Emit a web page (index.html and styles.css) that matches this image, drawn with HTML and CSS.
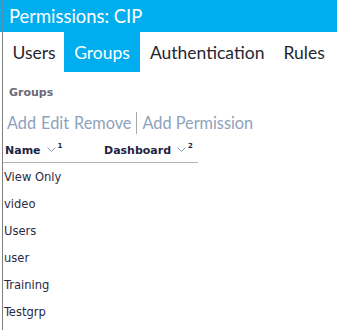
FILE: index.html
```html
<!DOCTYPE html>
<html>
<head>
<meta charset="utf-8">
<link rel="stylesheet" href="styles.css">
</head>
<body>
<div class="page">
  <div class="titlebar">Permissions: CIP</div>
  <div class="frame">
    <nav class="tabs">
      <span class="tab">Users</span>
      <span class="tab active">Groups</span>
      <span class="tab">Authentication</span>
      <span class="tab">Rules</span>
    </nav>
    <div class="section-label">Groups</div>
    <div class="toolbar">
      <span class="tool">Add</span>
      <span class="tool">Edit</span>
      <span class="tool">Remove</span>
      <span class="sep"></span>
      <span class="tool">Add Permission</span>
    </div>
    <div class="grid">
      <div class="grid-head">
        <div class="col col-name">Name<span class="sort"><svg width="9" height="6" viewBox="0 0 9 6"><path d="M0.5 0.5 L4.5 4.5 L8.5 0.5" fill="none" stroke="#8a9ab5" stroke-width="1"/></svg><sup>1</sup></span></div>
        <div class="col col-dash">Dashboard<span class="sort"><svg width="9" height="6" viewBox="0 0 9 6"><path d="M0.5 0.5 L4.5 4.5 L8.5 0.5" fill="none" stroke="#8a9ab5" stroke-width="1"/></svg><sup>2</sup></span></div>
      </div>
      <div class="row">View Only</div>
      <div class="row">video</div>
      <div class="row">Users</div>
      <div class="row">user</div>
      <div class="row">Training</div>
      <div class="row">Testgrp</div>
    </div>
  </div>
</div>
</body>
</html>
```
FILE: styles.css
```css
html, body {
  margin: 0;
  padding: 0;
  background: #ffffff;
}
.page {
  width: 337px;
  height: 330px;
  overflow: hidden;
}
.titlebar {
  height: 32px;
  box-sizing: border-box;
  padding: 5px 0 0 9px;
  background: linear-gradient(to right, #00aeef 2px, #4f93b3 2px, #4f93b3 3px, #00aeef 3px);
  color: #ffffff;
  font-family: "Lato", sans-serif;
  font-size: 18.4px;
  line-height: 22px;
}
.frame {
  margin-left: 2px;
  border-left: 1px solid #808080;
  height: 298px;
}
.tabs {
  display: flex;
  height: 40px;
}
.tab {
  display: flex;
  align-items: center;
  padding: 0 9.5px;
  font-family: "Lato", sans-serif;
  font-size: 17.5px;
  color: #262630;
}
.tab:first-child {
  padding-right: 8px;
}
.tab.active {
  background: #00aeef;
  color: #ffffff;
  padding: 0 10.5px;
}
.section-label {
  padding: 15px 0 0 6px;
  height: 25px;
  box-sizing: border-box;
  font-family: "DejaVu Sans", sans-serif;
  font-weight: bold;
  font-size: 11px;
  line-height: 12px;
  color: #6a6a78;
}
.toolbar {
  display: flex;
  align-items: center;
  gap: 5px;
  height: 39px;
  box-sizing: border-box;
  padding: 12px 0 0 4px;
  font-family: "Lato", sans-serif;
  font-size: 16.3px;
  color: #8ea2bc;
}
.sep {
  width: 1px;
  height: 22px;
  background: #a8a8a8;
}
.grid {
  width: 195px;
}
.grid-head {
  display: flex;
  height: 26px;
  border-bottom: 1px solid #b4b4b4;
  align-items: center;
  font-family: "DejaVu Sans", sans-serif;
  font-weight: bold;
  font-size: 11px;
  color: #1f2444;
}
.col-name {
  width: 99px;
  padding-left: 2px;
}
.sort {
  margin-left: 6px;
}
.sort svg {
  vertical-align: 1px;
}
.sort sup {
  font-size: 7px;
  vertical-align: 6px;
  margin-left: 2px;
}
.row {
  height: 27px;
  display: flex;
  align-items: center;
  padding-left: 1px;
  font-family: "DejaVu Sans Condensed", "Liberation Sans", sans-serif;
  font-size: 12.8px;
  color: #2a2a44;
}
```
